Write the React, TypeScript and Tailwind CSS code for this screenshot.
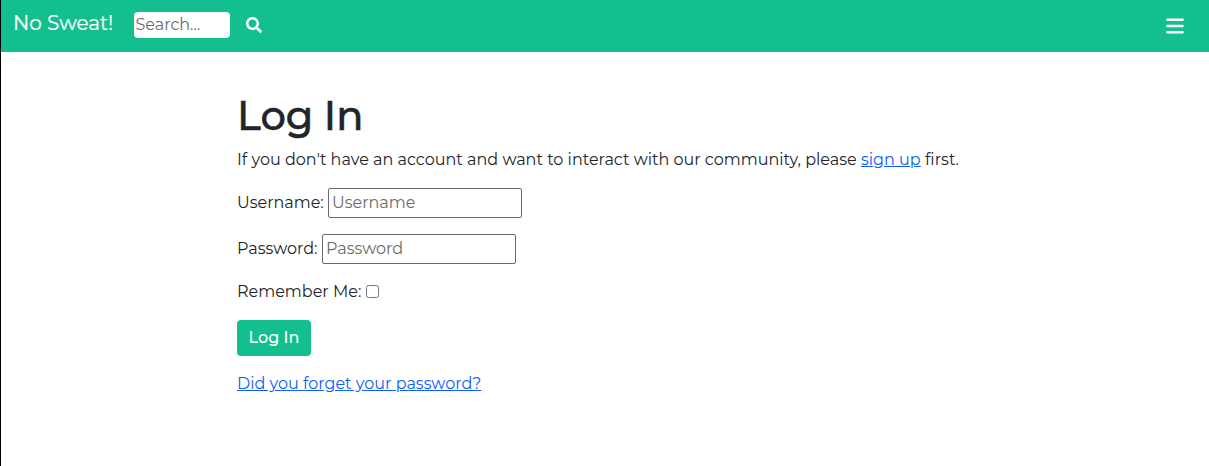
import React from "react";
import { FaSearch } from "react-icons/fa";
import { FaBars } from "react-icons/fa6";

export default function App() {
  return (
    <div className="min-h-[466px] border-l border-black bg-white font-['Montserrat','Inter',sans-serif] text-base leading-6 text-[#212529]">
      <header className="flex h-13 items-center bg-[#13bf8e] pl-3 pr-6 text-white">
        <a href="#" className="w-[121px] whitespace-nowrap pb-[6px] text-xl leading-[30px] [-webkit-text-stroke:0.2px]">
          No Sweat!
        </a>
        <input
          type="text"
          placeholder="Search..."
          aria-label="Search"
          className="mb-[2px] h-[26px] w-24 rounded bg-white px-[1.5px] pb-[2px] text-[#212529] placeholder:text-[#6c6c6c]"
        />
        <button type="button" aria-label="Submit search" className="ml-4 mb-[2px]">
          <FaSearch size={16} />
        </button>
        <button type="button" aria-label="Menu" className="ml-auto mb-px">
          <FaBars size={20} />
        </button>
      </header>
      <main className="pl-[236px] pt-10">
        <h1 className="mb-2 text-[40px] font-medium leading-12 tracking-[-0.1px] [-webkit-text-stroke:0.5px]">Log In</h1>
        <p className="whitespace-nowrap tracking-[0.01px]">
          If you don't have an account and want to interact with our community, please{" "}
          <a href="#" className="text-[#0d5efd] underline">sign up</a> first.
        </p>
        <form className="mt-4 flex flex-col items-start gap-4">
          <div className="flex items-center">
            <label htmlFor="username" className="w-[91px] whitespace-nowrap">Username:</label>
            <input
              id="username"
              type="text"
              placeholder="Username"
              className="h-[30px] w-[194px] rounded-[2px] border border-[#6b6b6b] px-[3px] pb-[2px] placeholder:text-[#6c6c6c]"
            />
          </div>
          <div className="flex items-center">
            <label htmlFor="password" className="w-[85px] whitespace-nowrap">Password:</label>
            <input
              id="password"
              type="password"
              placeholder="Password"
              className="h-[30px] w-[194px] rounded-[2px] border border-[#6b6b6b] px-[3px] pb-[2px] placeholder:text-[#6c6c6c]"
            />
          </div>
          <div className="flex items-center">
            <label htmlFor="remember" className="w-[129px] whitespace-nowrap">Remember Me:</label>
            <input id="remember" type="checkbox" className="mb-[2px] size-[13px]" />
          </div>
          <button type="button" className="h-9 w-[74px] rounded bg-[#13bf8e] pb-px font-medium text-white">
            Log In
          </button>
        </form>
        <a href="#" className="mt-4 inline-block whitespace-nowrap text-[#0d5efd] underline">
          Did you forget your password?
        </a>
      </main>
    </div>
  );
}
